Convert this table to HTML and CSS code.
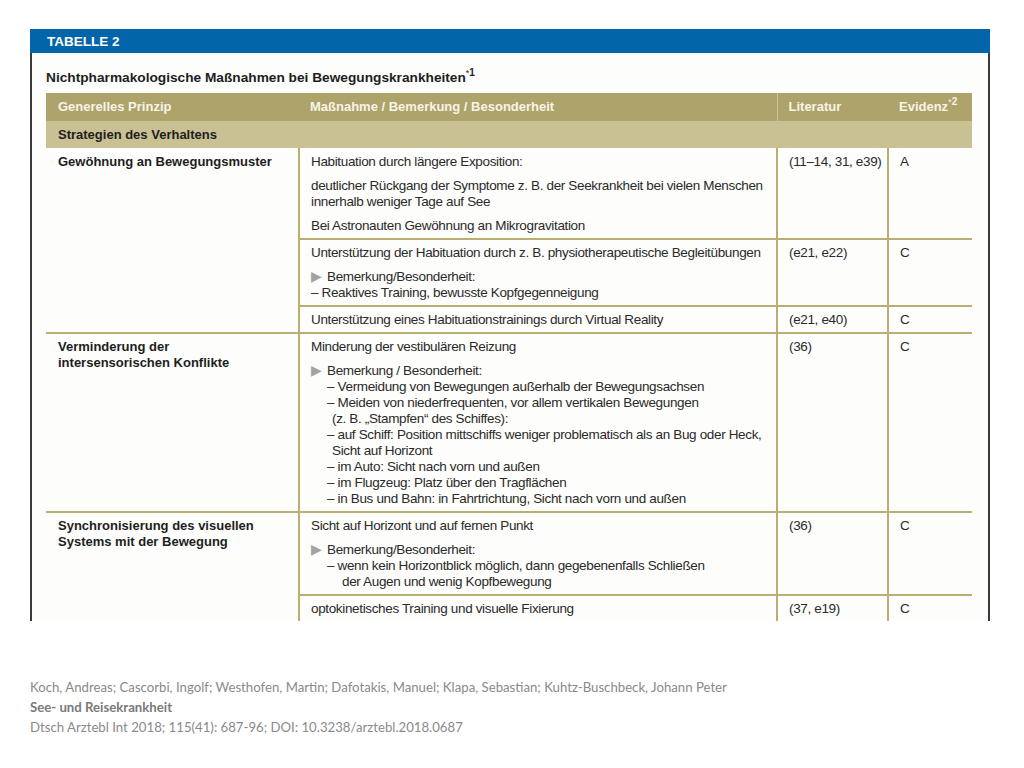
FILE: index.html
```html
<!DOCTYPE html>
<html lang="de">
<head>
<meta charset="utf-8">
<title>Tabelle 2</title>
<link rel="stylesheet" href="styles.css">
</head>
<body>
<div class="frame">
  <div class="bar">TABELLE 2</div>
  <div class="sheet">
    <h1 class="title">Nichtpharmakologische Maßnahmen bei Bewegungskrankheiten<sup><span class="ast">*</span>1</sup></h1>
    <table class="tbl">
      <colgroup><col class="c1"><col class="c2"><col class="c3"><col class="c4"></colgroup>
      <thead>
        <tr class="head">
          <th class="h1">Generelles Prinzip</th>
          <th>Maßnahme / Bemerkung / Besonderheit</th>
          <th class="lit">Literatur</th>
          <th>Evidenz<sup><span class="ast">*</span>2</sup></th>
        </tr>
        <tr class="cat"><th colspan="4">Strategien des Verhaltens</th></tr>
      </thead>
      <tbody>
        <tr class="first">
          <td rowspan="3" class="prin">Gewöhnung an Bewegungsmuster</td>
          <td><p>Habituation durch längere Exposition:</p><p>deutlicher Rückgang der Symptome z. B. der Seekrankheit bei vielen Menschen<br>innerhalb weniger Tage auf See</p><p>Bei Astronauten Gewöhnung an Mikrogravitation</p></td>
          <td>(11–14, 31, e39)</td>
          <td>A</td>
        </tr>
        <tr class="sub">
          <td><p>Unterstützung der Habituation durch z. B. physiotherapeutische Begleitübungen</p><div class="note"><span class="tri">▶</span>Bemerkung/Besonderheit:</div><div>– Reaktives Training, bewusste Kopfgegenneigung</div></td>
          <td>(e21, e22)</td>
          <td>C</td>
        </tr>
        <tr class="sub">
          <td><p>Unterstützung eines Habituationstrainings durch Virtual Reality</p></td>
          <td>(e21, e40)</td>
          <td>C</td>
        </tr>
        <tr class="group">
          <td class="prin">Verminderung der<br>intersensorischen Konflikte</td>
          <td><p>Minderung der vestibulären Reizung</p><div class="note"><span class="tri">▶</span>Bemerkung / Besonderheit:</div>
            <div class="item">– Vermeidung von Bewegungen außerhalb der Bewegungsachsen</div>
            <div class="item">– Meiden von niederfrequenten, vor allem vertikalen Bewegungen<br>(z. B. „Stampfen“ des Schiffes):</div>
            <div class="item">– auf Schiff: Position mittschiffs weniger problematisch als an Bug oder Heck,<br>Sicht auf Horizont</div>
            <div class="item">– im Auto: Sicht nach vorn und außen</div>
            <div class="item">– im Flugzeug: Platz über den Tragflächen</div>
            <div class="item">– in Bus und Bahn: in Fahrtrichtung, Sicht nach vorn und außen</div>
          </td>
          <td>(36)</td>
          <td>C</td>
        </tr>
        <tr class="group">
          <td rowspan="2" class="prin">Synchronisierung des visuellen<br>Systems mit der Bewegung</td>
          <td><p>Sicht auf Horizont und auf fernen Punkt</p><div class="note"><span class="tri">▶</span>Bemerkung/Besonderheit:</div>
            <div class="item wide">– wenn kein Horizontblick möglich, dann gegebenenfalls Schließen<br>der Augen und wenig Kopfbewegung</div>
          </td>
          <td>(36)</td>
          <td>C</td>
        </tr>
        <tr class="sub">
          <td><p>optokinetisches Training und visuelle Fixierung</p></td>
          <td>(37, e19)</td>
          <td>C</td>
        </tr>
      </tbody>
    </table>
  </div>
</div>
<div class="cite">
  <div>Koch, Andreas; Cascorbi, Ingolf; Westhofen, Martin; Dafotakis, Manuel; Klapa, Sebastian; Kuhtz-Buschbeck, Johann Peter</div>
  <div class="cite-title">See- und Reisekrankheit</div>
  <div>Dtsch Arztebl Int 2018; 115(41): 687-96; DOI: 10.3238/arztebl.2018.0687</div>
</div>
</body>
</html>
```
FILE: styles.css
```css
html, body {
  margin: 0;
  padding: 0;
  background: #ffffff;
}

.frame {
  margin: 29px 0 0 30px;
  width: 960px;
  height: 592px;
  overflow: hidden;
  display: flex;
  flex-direction: column;
}

.bar {
  height: 24px;
  line-height: 25px;
  background: #0265aa;
  color: #ffffff;
  font-family: "Liberation Sans", Arial, sans-serif;
  font-weight: bold;
  font-size: 13.5px;
  padding-left: 17px;
  flex: none;
}

.sheet {
  flex: 1;
  border-left: 2px solid #3a3a3a;
  border-right: 2px solid #3a3a3a;
  background: #fdfdfb;
  padding: 17px 0 0 14px;
  overflow: hidden;
}

.title {
  margin: 0 0 7px 0;
  font-family: "Liberation Sans", Arial, sans-serif;
  font-weight: bold;
  font-size: 13.7px;
  line-height: 16px;
  color: #1e1e1e;
}

sup {
  font-size: 10px;
  line-height: 0;
  vertical-align: 6px;
  font-weight: bold;
}

.ast {
  font-weight: normal;
  font-size: 9px;
  vertical-align: 0;
}

.tbl {
  width: 926px;
  table-layout: fixed;
  border-collapse: collapse;
  font-family: "Liberation Sans", Arial, sans-serif;
  font-size: 13.5px;
  letter-spacing: -0.35px;
  line-height: 16px;
  color: #2a2a2a;
}

.c1 { width: 253px; }
.c2 { width: 478px; }
.c3 { width: 111px; }
.c4 { width: 84px; }

.head th {
  background: #aea36b;
  color: #f7f4e6;
  font-weight: bold;
  font-size: 13px;
  letter-spacing: 0;
  text-align: left;
  height: 28px;
  padding: 0 0 0 11px;
}

.head th.h1 { padding-left: 12px; }

.head th.lit { border-left: 1px solid #cbc39b; }

.cat th {
  background: #c9c094;
  color: #1e1e1e;
  font-weight: bold;
  font-size: 13px;
  letter-spacing: 0;
  text-align: left;
  height: 27px;
  padding: 0 0 0 12px;
}

.tbl td {
  vertical-align: top;
  padding: 5px 2px 4px 11px;
  border-left: 2px solid #b9af72;
}

.tbl .first td {
  padding-top: 6px;
}

.tbl td.prin {
  border-left: none;
  padding-left: 12px;
  font-weight: bold;
  font-size: 13px;
  letter-spacing: 0;
  color: #1e1e1e;
}

.sub td,
.group td {
  border-top: 2px solid #b9af72;
}

.tbl p {
  margin: 0 0 8px 0;
}

.tbl td p:last-child {
  margin-bottom: 0;
}

.tri {
  display: inline-block;
  width: 16px;
  color: #a3a3a3;
  font-size: 13.5px;
  letter-spacing: 0;
}

.item {
  padding-left: 21px;
  text-indent: -5px;
}

.item.wide {
  padding-left: 31px;
  text-indent: -15px;
}

.cite {
  margin: 56px 0 0 30px;
  font-family: Lato, "Open Sans", sans-serif;
  font-size: 13.2px;
  line-height: 20px;
  color: #8a8a8a;
}

.cite-title {
  font-weight: bold;
  color: #7a7a7a;
}
```
